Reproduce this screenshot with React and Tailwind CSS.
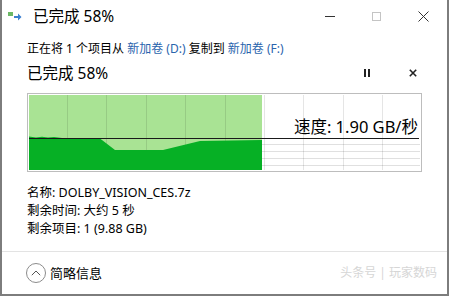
import React from "react";

const font = { fontFamily: '"Noto Sans", "Noto Sans CJK SC", sans-serif' };

function CopyIcon() {
  return (
    <svg width="14" height="10" viewBox="0 0 14 10">
      <rect x="0" y="1" width="5" height="4" fill="#6cb866" />
      <path d="M6 5 h4 v-2.5 l3.5 3.5 l-3.5 3.5 v-2.5 h-4 z" fill="#3a7fd0" />
    </svg>
  );
}

function Chart() {
  const W = 393;
  const H = 77;
  const vlines = [];
  for (let k = 1; k < 10; k++) vlines.push(39.4 * k - 0.5);
  const hlines = [50, 57, 64, 71];
  return (
    <svg width={W} height={H} viewBox={`0 0 ${W} ${H}`} className="block">
      <rect x="1" y="1" width="233" height="75" fill="#a9e394" />
      {hlines.map((y) => (
        <line key={y} x1="234" y1={y + 0.5} x2={W - 1} y2={y + 0.5} stroke="#e0e0e0" strokeWidth="1" />
      ))}
      {vlines.map((x) => (
        <line key={x} x1={Math.round(x) + 0.5} y1="1" x2={Math.round(x) + 0.5} y2="76" stroke="rgba(0,0,0,0.1)" strokeWidth="1" />
      ))}
      <polygon
        points="1,42.5 8,43.5 14,42.8 20,43.6 26,43 34,44 40,44.5 72,44.5 87,56 135,56 172,47 234,46 234,76 1,76"
        fill="#06b025"
      />
      <line x1="1" y1="44.5" x2={W - 2} y2="44.5" stroke="#1a1a1a" strokeWidth="1" />
    </svg>
  );
}

export default function App() {
  return (
    <div
      className="w-[449px] h-[296px] bg-white border-x-2 border-b-2 border-[#7d7d7d] flex flex-col text-black overflow-hidden"
      style={font}
    >
      {/* title bar */}
      <div className="h-[32px] flex items-center shrink-0">
        <div className="pl-[6px] flex items-center">
          <CopyIcon />
        </div>
        <span className="ml-[11px] text-[15.5px] leading-[20px]">已完成 58%</span>
        <div className="ml-auto flex">
          <div className="w-[47px] h-[32px] flex items-center justify-center">
            <div className="w-[10px] h-px bg-[#333]" />
          </div>
          <div className="w-[47px] h-[32px] flex items-center justify-center">
            <div className="w-[9px] h-[9px] border border-[#c4c4c4]" />
          </div>
          <div className="w-[47px] h-[32px] flex items-center justify-center">
            <svg width="11" height="11" viewBox="0 0 11 11">
              <path d="M0.5 0.5 L10.5 10.5 M10.5 0.5 L0.5 10.5" stroke="#333" strokeWidth="1" />
            </svg>
          </div>
        </div>
      </div>

      <div className="mt-[9px] pl-[25px] h-[16px] leading-[16px] text-[12px] whitespace-nowrap">
        正在将 1 个项目从 <span className="text-[#2a64ad]">新加卷 (D:)</span> 复制到{" "}
        <span className="text-[#2a64ad]">新加卷 (F:)</span>
      </div>

      <div className="mt-[5px] h-[22px] pl-[25px] pr-[11px] flex items-center">
        <span className="text-[15.5px] leading-[20px]">已完成 58%</span>
        <div className="ml-auto flex">
          <div className="w-[46px] h-[22px] flex items-center justify-center gap-[2px]">
            <div className="w-[2px] h-[8px] bg-[#222]" />
            <div className="w-[2px] h-[8px] bg-[#222]" />
          </div>
          <div className="w-[46px] h-[22px] flex items-center justify-center">
            <svg width="8" height="8" viewBox="0 0 8 8">
              <path d="M0.8 0.8 L7.2 7.2 M7.2 0.8 L0.8 7.2" stroke="#222" strokeWidth="1.6" />
            </svg>
          </div>
        </div>
      </div>

      <div className="mt-[9px] ml-[25px] w-[395px] h-[79px] border border-[#bdbdbd] relative shrink-0">
        <Chart />
        <div className="absolute right-[3px] top-[22px] text-[16.5px] leading-[22px] whitespace-nowrap">
          速度: 1.90 GB/秒
        </div>
      </div>

      <div className="mt-[12px] pl-[25px] text-[12.5px]">
        <div className="h-[18px] leading-[18px]">名称: DOLBY_VISION_CES.7z</div>
        <div className="h-[18px] leading-[18px]">剩余时间: 大约 5 秒</div>
        <div className="h-[18px] leading-[18px]">剩余项目: 1 (9.88 GB)</div>
      </div>

      <div className="mt-[13px] border-t border-[#e3e3e3]" />

      <div className="flex-1 flex items-center pl-[24px] pr-[10px]">
        <div className="w-[20px] h-[20px] rounded-full border border-[#8c8c8c] flex items-center justify-center">
          <svg width="10" height="6" viewBox="0 0 10 6">
            <path d="M0.8 5.2 L5 1 L9.2 5.2" fill="none" stroke="#555" strokeWidth="1" />
          </svg>
        </div>
        <span className="ml-[4px] text-[13px] leading-[18px]">简略信息</span>
        <span className="ml-auto text-[12px] leading-[18px] text-[#d6d6d6]">头条号 | 玩家数码</span>
      </div>
    </div>
  );
}
